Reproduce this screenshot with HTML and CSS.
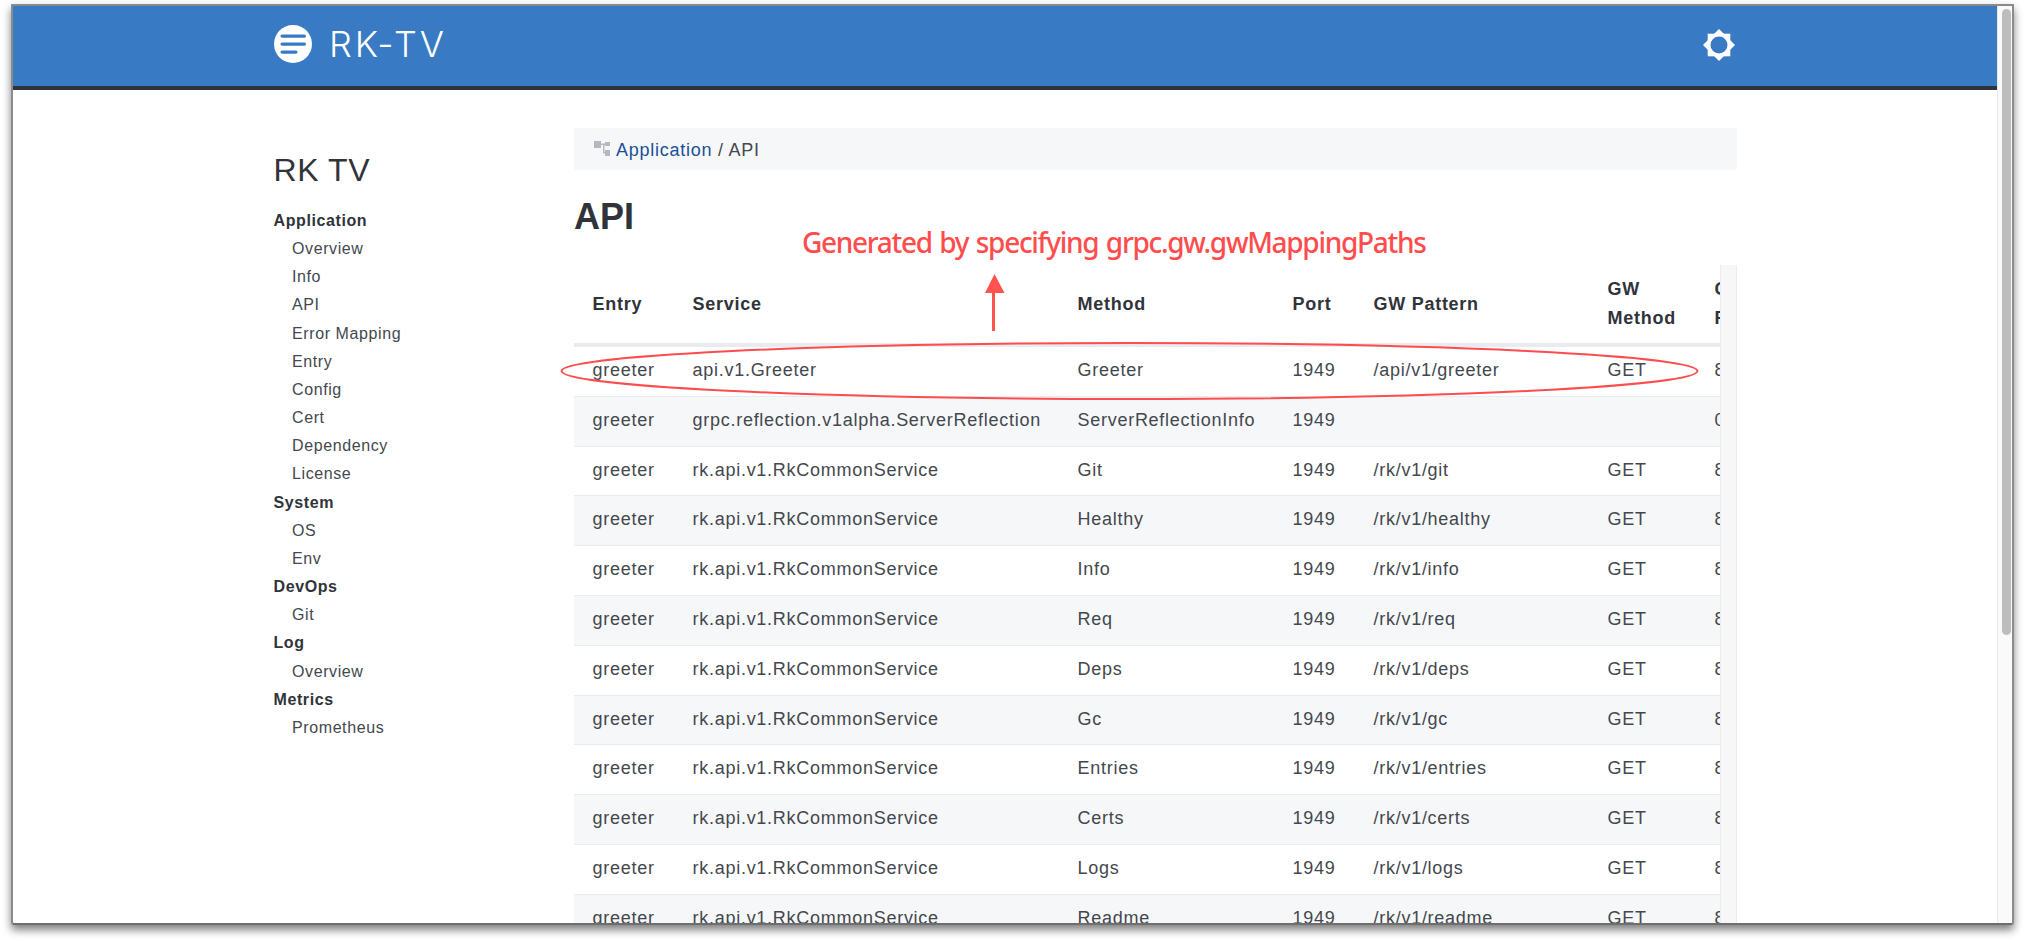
FILE: index.html
```html
<!DOCTYPE html>
<html lang="en">
<head>
  <meta charset="UTF-8" />
  <meta name="viewport" content="width=device-width, initial-scale=1.0" />
  <title>RK-TV</title>
  <link rel="stylesheet" href="styles.css">
</head>
<body>
  <div class="window">
    <div class="page">
      <header class="topbar">
        <div class="topbar-inner">
          <a class="brand">
            <svg class="brand-logo" viewBox="0 0 38 38">
              <circle cx="19" cy="19" r="19" fill="#fff" />
              <rect x="6.5" y="9.5" width="25.500" height="3.200" rx="1.600" fill="#387ac3" />
              <rect x="6.5" y="17.500" width="25.500" height="3.200" rx="1.600" fill="#387ac3" />
              <rect x="6.5" y="25.500" width="17" height="3.200" rx="1.600" fill="#387ac3" />
            </svg>
            <span class="brand-name">RK-TV</span>
          </a>
          <svg class="theme-icon" viewBox="0 0 32 32">
            <rect x="4.700" y="4.700" width="22.600" height="22.600" fill="#fff" />
            <rect x="4.700" y="4.700" width="22.600" height="22.600" fill="#fff" transform="rotate(45 16 16)" />
            <circle cx="16" cy="16" r="8.500" fill="#387ac3" />
          </svg>
        </div>
      </header>

      <div class="layout">
        <aside class="sidebar">
          <h2>RK TV</h2>
          <ul class="nav">
            <li class="nav-group">Application</li>
            <li>Overview</li>
            <li>Info</li>
            <li>API</li>
            <li>Error Mapping</li>
            <li>Entry</li>
            <li>Config</li>
            <li>Cert</li>
            <li>Dependency</li>
            <li>License</li>
            <li class="nav-group">System</li>
            <li>OS</li>
            <li>Env</li>
            <li class="nav-group">DevOps</li>
            <li>Git</li>
            <li class="nav-group">Log</li>
            <li>Overview</li>
            <li class="nav-group">Metrics</li>
            <li>Prometheus</li>
          </ul>
        </aside>

        <main class="content">
          <nav class="breadcrumb">
            <svg class="crumb-icon" viewBox="0 0 16 15">
              <path d="M0 0h7v7H0zM11 1h5v4h-5zM11 9h5v6h-5zM7 2.500h4v1.500H7zM9 3h1.500v9H9zM9 11h2v1.500H9z" fill="#b4b9bf" />
            </svg>
            <a href="#">Application</a>&nbsp;/ API
          </nav>
          <h1>API</h1>
          <div class="table-wrap">
            <div class="table-clip">
              <table>
                <colgroup>
                  <col class="c-entry"><col class="c-service"><col class="c-method"><col class="c-port"><col class="c-pattern"><col class="c-gw"><col class="c-gwport">
                </colgroup>
                <thead>
                  <tr><th>Entry</th><th>Service</th><th>Method</th><th>Port</th><th>GW Pattern</th><th>GW Method</th><th>GW Port</th></tr>
                </thead>
                <tbody>
                  <tr><td>greeter</td><td>api.v1.Greeter</td><td>Greeter</td><td>1949</td><td>/api/v1/greeter</td><td>GET</td><td>8080</td></tr>
                  <tr><td>greeter</td><td>grpc.reflection.v1alpha.ServerReflection</td><td>ServerReflectionInfo</td><td>1949</td><td></td><td></td><td>0</td></tr>
                  <tr><td>greeter</td><td>rk.api.v1.RkCommonService</td><td>Git</td><td>1949</td><td>/rk/v1/git</td><td>GET</td><td>8080</td></tr>
                  <tr><td>greeter</td><td>rk.api.v1.RkCommonService</td><td>Healthy</td><td>1949</td><td>/rk/v1/healthy</td><td>GET</td><td>8080</td></tr>
                  <tr><td>greeter</td><td>rk.api.v1.RkCommonService</td><td>Info</td><td>1949</td><td>/rk/v1/info</td><td>GET</td><td>8080</td></tr>
                  <tr><td>greeter</td><td>rk.api.v1.RkCommonService</td><td>Req</td><td>1949</td><td>/rk/v1/req</td><td>GET</td><td>8080</td></tr>
                  <tr><td>greeter</td><td>rk.api.v1.RkCommonService</td><td>Deps</td><td>1949</td><td>/rk/v1/deps</td><td>GET</td><td>8080</td></tr>
                  <tr><td>greeter</td><td>rk.api.v1.RkCommonService</td><td>Gc</td><td>1949</td><td>/rk/v1/gc</td><td>GET</td><td>8080</td></tr>
                  <tr><td>greeter</td><td>rk.api.v1.RkCommonService</td><td>Entries</td><td>1949</td><td>/rk/v1/entries</td><td>GET</td><td>8080</td></tr>
                  <tr><td>greeter</td><td>rk.api.v1.RkCommonService</td><td>Certs</td><td>1949</td><td>/rk/v1/certs</td><td>GET</td><td>8080</td></tr>
                  <tr><td>greeter</td><td>rk.api.v1.RkCommonService</td><td>Logs</td><td>1949</td><td>/rk/v1/logs</td><td>GET</td><td>8080</td></tr>
                  <tr><td>greeter</td><td>rk.api.v1.RkCommonService</td><td>Readme</td><td>1949</td><td>/rk/v1/readme</td><td>GET</td><td>8080</td></tr>
                </tbody>
              </table>
            </div>
            <div class="table-bar"></div>
          </div>
        </main>
      </div>
    </div>

    <div class="scrollbar"><div class="scrollbar-thumb"></div></div>
  </div>

  <div class="note">Generated by specifying grpc.gw.gwMappingPaths</div>
  <svg class="marks" viewBox="0 0 2024 941">
    <ellipse cx="1129.500" cy="371" rx="568" ry="28" fill="none" stroke="#ff4d4d" stroke-width="2" />
    <path d="M993.500 331V290" fill="none" stroke="#ff5350" stroke-width="3" />
    <path d="M994.500 274L1004.500 293H985z" fill="#ff5350" />
  </svg>
</body>
</html>
```

FILE: styles.css
```css
:root {
  --blue: #387ac3;
  --ink: #30343a;
  --text: #43484e;
  --line: #e9ebf0;
  --stripe: #f6f7f9;
  --red: #ff4d4d;
}
html, body {
  height: 100%;
}
body {
  margin: 0;
  background: #fff;
  color: var(--text);
  font-family: 'Liberation Sans', Arial, sans-serif;
  overflow: hidden;
}
.window {
  box-sizing: border-box;
  width: 2003px;
  height: 921px;
  margin: 4px 0 0 11px;
  border: 2px solid #8b8b8b;
  border-bottom-color: #6e6e6e;
  border-bottom-left-radius: 3px;
  border-bottom-right-radius: 3px;
  display: flex;
  overflow: hidden;
  background: #fff;
  box-shadow: 0 5px 8px rgba(0, 0, 0, 0.5);
}
.page {
  flex: 1;
  min-width: 0;
}
.topbar {
  box-sizing: border-box;
  height: 84px;
  background: var(--blue);
  border-bottom: 4px solid var(--ink);
}
.topbar-inner {
  width: 1464px;
  height: 80px;
  margin: 0 auto;
  display: flex;
  align-items: center;
  justify-content: space-between;
}
.brand {
  display: flex;
  align-items: center;
  gap: 17px;
  padding-left: 1px;
  margin-top: -4px;
}
.brand-logo {
  width: 38px;
  height: 38px;
}
.brand-name {
  color: #fff;
  font-family: Inter, sans-serif;
  font-weight: 300;
  font-size: 36px;
  letter-spacing: 3px;
}
.theme-icon {
  width: 32px;
  height: 32px;
  margin-right: 2px;
  margin-top: -2px;
}
.layout {
  width: 1464px;
  margin: 0 auto;
  display: flex;
}
.sidebar {
  width: 300.500px;
  padding-left: 0.500px;
  flex: none;
}
.sidebar h2 {
  margin: 59px 0 16px;
  font-size: 32px;
  font-weight: 400;
  line-height: 42px;
  letter-spacing: 0.6px;
  color: var(--ink);
}
.nav {
  list-style: none;
  margin: 0;
  padding: 0 0 0 18.500px;
  font-size: 16px;
  line-height: 28.150px;
  letter-spacing: 0.6px;
}
.nav-group {
  margin-left: -18.500px;
  font-weight: bold;
  color: var(--ink);
}
.content {
  flex: 1;
  min-width: 0;
  padding-top: 38px;
}
.breadcrumb {
  box-sizing: border-box;
  height: 42px;
  padding: 2px 20px 0;
  display: flex;
  align-items: center;
  background: var(--stripe);
  border-radius: 2px;
  font-size: 18px;
  letter-spacing: 0.75px;
  color: var(--text);
}
.breadcrumb a {
  color: #1a4f99;
  text-decoration: none;
}
.crumb-icon {
  width: 16px;
  height: 15px;
  margin-right: 6px;
  margin-top: -3px;
}
.content h1 {
  margin: 30px 0 31px;
  font-size: 36px;
  line-height: 34px;
  color: var(--ink);
}
.table-wrap {
  display: flex;
  height: 700px;
}
.table-clip {
  flex: 1;
  min-width: 0;
  overflow: hidden;
}
.table-bar {
  box-sizing: border-box;
  width: 17px;
  flex: none;
  background: #f7f7f7;
  border-left: 1px solid #ececec;
  border-right: 1px solid #ececec;
}
table {
  table-layout: fixed;
  width: 1222px;
  border-collapse: collapse;
  font-size: 18px;
  line-height: 28.800px;
  letter-spacing: 0.73px;
}
.c-entry { width: 100px; }
.c-service { width: 385px; }
.c-method { width: 215px; }
.c-port { width: 81px; }
.c-pattern { width: 234px; }
.c-gw { width: 107px; }
.c-gwport { width: 100px; }
th, td {
  text-align: left;
}
th {
  height: 58px;
  padding: 10px 19px 10px 18.500px;
  color: var(--ink);
  font-weight: bold;
  border-bottom: 4px solid var(--line);
}
td {
  padding: 9px 19px 11px 18.500px;
  white-space: nowrap;
  border-top: 1px solid var(--line);
}
tbody tr:nth-child(even) {
  background: var(--stripe);
}
.scrollbar {
  box-sizing: border-box;
  width: 15px;
  flex: none;
  padding: 3px 1px 0 4px;
  background: #fafafa;
  border-left: 1px solid #e8e8e8;
}
.scrollbar-thumb {
  height: 626px;
  background: #bdbdbd;
  border-radius: 5px;
}
.note {
  position: absolute;
  left: 802px;
  top: 222px;
  color: var(--red);
  font-family: 'Noto Sans', sans-serif;
  font-size: 28px;
  font-weight: 500;
  letter-spacing: -1.3px;
  word-spacing: 1.5px;
  line-height: 40px;
  white-space: nowrap;
}
.marks {
  position: absolute;
  left: 0;
  top: 0;
  width: 2024px;
  height: 941px;
  pointer-events: none;
}
```
